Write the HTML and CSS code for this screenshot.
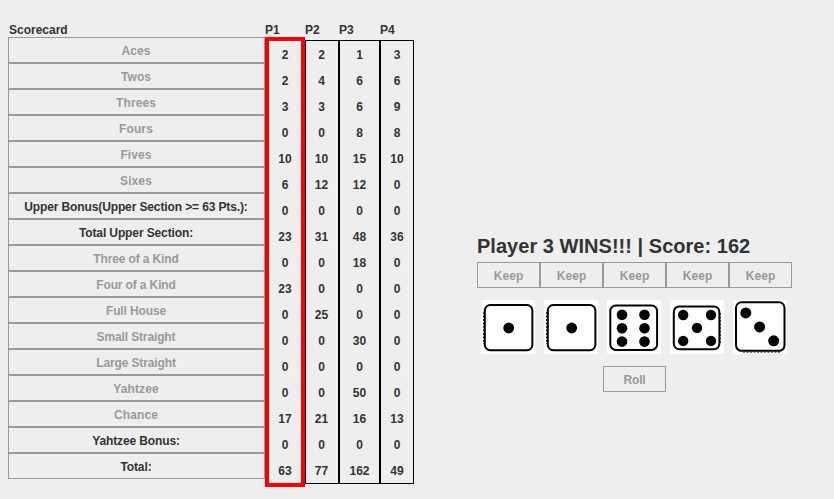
FILE: index.html
```html
<!DOCTYPE html>
<html lang="en">
<head>
<meta charset="utf-8">
<title>Yahtzee</title>
<link rel="stylesheet" href="styles.css">
</head>
<body>
<main class="game">
  <section class="card">
    <div class="column categories">
      <h2 class="label title">Scorecard</h2>
      <button class="cell" disabled>Aces</button>
      <button class="cell" disabled>Twos</button>
      <button class="cell" disabled>Threes</button>
      <button class="cell" disabled>Fours</button>
      <button class="cell" disabled>Fives</button>
      <button class="cell" disabled>Sixes</button>
      <div class="cell total">Upper Bonus(Upper Section &gt;= 63 Pts.):</div>
      <div class="cell total">Total Upper Section:</div>
      <button class="cell phrase" disabled>Three of a Kind</button>
      <button class="cell phrase" disabled>Four of a Kind</button>
      <button class="cell phrase" disabled>Full House</button>
      <button class="cell phrase" disabled>Small Straight</button>
      <button class="cell phrase" disabled>Large Straight</button>
      <button class="cell" disabled>Yahtzee</button>
      <button class="cell" disabled>Chance</button>
      <div class="cell total">Yahtzee Bonus:</div>
      <div class="cell total">Total:</div>
    </div>
    <div class="column p1">
      <h2 class="label">P1</h2>
      <div class="scores active"><span>2</span><span>2</span><span>3</span><span>0</span><span>10</span><span>6</span><span>0</span><span>23</span><span>0</span><span>23</span><span>0</span><span>0</span><span>0</span><span>0</span><span>17</span><span>0</span><span>63</span></div>
    </div>
    <div class="column p2">
      <h2 class="label">P2</h2>
      <div class="scores"><span>2</span><span>4</span><span>3</span><span>0</span><span>10</span><span>12</span><span>0</span><span>31</span><span>0</span><span>0</span><span>25</span><span>0</span><span>0</span><span>0</span><span>21</span><span>0</span><span>77</span></div>
    </div>
    <div class="column p3">
      <h2 class="label">P3</h2>
      <div class="scores"><span>1</span><span>6</span><span>6</span><span>8</span><span>15</span><span>12</span><span>0</span><span>48</span><span>18</span><span>0</span><span>0</span><span>30</span><span>0</span><span>50</span><span>16</span><span>0</span><span>162</span></div>
    </div>
    <div class="column p4">
      <h2 class="label">P4</h2>
      <div class="scores"><span>3</span><span>6</span><span>9</span><span>8</span><span>10</span><span>0</span><span>0</span><span>36</span><span>0</span><span>0</span><span>0</span><span>0</span><span>0</span><span>0</span><span>13</span><span>0</span><span>49</span></div>
    </div>
  </section>
  <section class="table">
    <h1 class="result">Player 3 WINS!!! | Score: 162</h1>
    <div class="keeps">
      <button class="cell" disabled>Keep</button>
      <button class="cell" disabled>Keep</button>
      <button class="cell" disabled>Keep</button>
      <button class="cell" disabled>Keep</button>
      <button class="cell" disabled>Keep</button>
    </div>
    <div class="dice">
      <svg class="die" viewBox="0 0 54 54"><rect class="face" x="3.8" y="5" width="47.6" height="45.2" rx="5.5"/><path class="worn" d="M2.5 12V44"/><circle cx="27.7" cy="28" r="5.4"/></svg>
      <svg class="die" viewBox="0 0 54 54"><rect class="face" x="3.8" y="5" width="47.6" height="45.2" rx="5.5"/><path class="worn" d="M2.5 12V44"/><circle cx="27.7" cy="28" r="5.4"/></svg>
      <svg class="die" viewBox="0 0 54 54"><rect class="face" x="3.3" y="5.5" width="46.8" height="44.4" rx="5.5"/><circle cx="15" cy="14.8" r="5.3"/><circle cx="37.5" cy="14.8" r="5.3"/><circle cx="15" cy="28.2" r="5.3"/><circle cx="37.5" cy="28.2" r="5.3"/><circle cx="15" cy="41.6" r="5.3"/><circle cx="37.5" cy="41.6" r="5.3"/></svg>
      <svg class="die" viewBox="0 0 54 54"><rect class="face" x="3.8" y="6.4" width="45.6" height="42.8" rx="5.5"/><path class="worn" d="M50.3 13V44"/><circle cx="13.2" cy="15" r="5.2"/><circle cx="41" cy="15" r="5.2"/><circle cx="27" cy="27.9" r="5.2"/><circle cx="13.2" cy="40.9" r="5.2"/><circle cx="41" cy="40.9" r="5.2"/></svg>
      <svg class="die" viewBox="0 0 54 54"><rect class="face" x="3" y="2.3" width="48.5" height="48.5" rx="5.5"/><path class="worn" d="M10 52.2H48"/><circle cx="12.8" cy="12.9" r="5.5"/><circle cx="26.6" cy="26.9" r="5.5"/><circle cx="40.7" cy="40.8" r="5.5"/></svg>
    </div>
    <button class="cell roll" disabled>Roll</button>
  </section>
</main>
</body>
</html>
```
FILE: styles.css
```css
* { box-sizing: border-box; }

body {
  margin: 0;
  background: #eee;
  color: #333;
  font: bold 12px/16px "Liberation Sans", Arial, sans-serif;
}

.game {
  display: flex;
  align-items: flex-start;
  width: 834px;
  height: 499px;
  padding: 22px 0 0 8px;
}

.card { display: flex; }

.column {
  display: flex;
  flex-direction: column;
}

.categories { width: 257px; }
.p1 { width: 40px; }
.p2 { width: 34px; }
.p3 { width: 41px; }
.p4 { width: 34px; }

.label {
  height: 15px;
  margin: 0;
  font-size: 12px;
  line-height: 16px;
}

.title { padding-left: 1px; }

.cell {
  display: block;
  height: 26px;
  padding: 1px 1px 0 0;
  border: 1px solid #999;
  border-radius: 0;
  background: #eee;
  color: #999;
  font: inherit;
  line-height: 25px;
  letter-spacing: 0.1px;
  text-align: center;
}

.phrase { letter-spacing: -0.13px; }

.total { color: #333; letter-spacing: -0.12px; }

.scores {
  display: flex;
  flex-direction: column;
  margin-top: 3px;
  padding-top: 1px;
  border: 1px solid #000;
  height: 444px;
}

.scores.active {
  height: 450px;
  margin-top: 0;
  border: 4px solid #f00;
}

.scores span {
  height: 26px;
  line-height: 26px;
  text-align: center;
  flex: none;
}

.p2 .scores span { padding-right: 1px; }

.table {
  display: flex;
  flex-direction: column;
  width: 315px;
  margin: 212px 0 0 63px;
}

.result {
  margin: 0;
  height: 28px;
  font-size: 20px;
  line-height: 24px;
  letter-spacing: 0.03px;
  white-space: nowrap;
}

.keeps { display: flex; }
.keeps .cell { width: 63px; padding-right: 0; }

.dice {
  display: flex;
  gap: 9px;
  margin: 12px 0 12px 4px;
}

.die {
  width: 54px;
  height: 54px;
  background: #fff;
}

.face {
  fill: #fff;
  stroke: #000;
  stroke-width: 2;
}

.worn {
  stroke: #000;
  stroke-width: 0.8;
  stroke-dasharray: 2 1.5;
}

.roll {
  width: 63px;
  padding-right: 0;
  align-self: center;
  font-weight: bold;
  letter-spacing: -0.2px;
}
```
